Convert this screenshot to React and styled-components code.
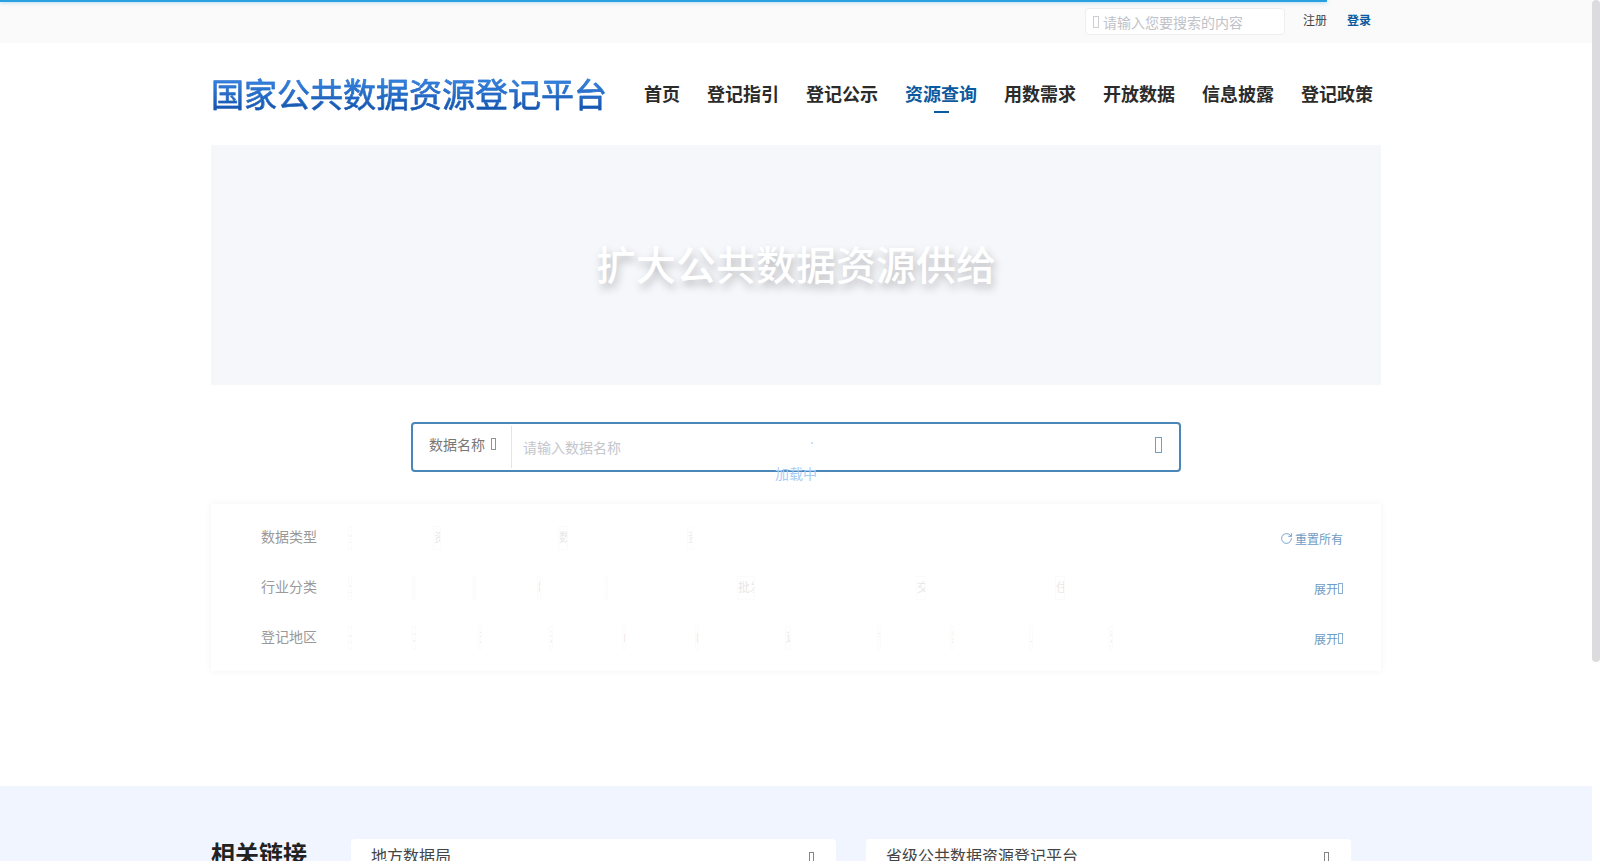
import React from 'react';
import styled, { createGlobalStyle } from 'styled-components';
import { RotateCw } from 'lucide-react';

const FONT = `"Liberation Sans", "Noto Sans CJK SC", sans-serif`;

const GlobalStyle = createGlobalStyle`
    html, body { height: 100%; overflow: hidden; }
    body { margin: 0; font-family: ${FONT}; background: #fff; color: #333; }
`;

const Page = styled.div`
    height: 100vh;
    display: flex;
    overflow: hidden;
`;

const Main = styled.main`
    flex: 1;
    min-width: 0;
`;

// the screenshot shows a page scrollbar, headless chrome hides the real one
const ScrollRail = styled.div`
    width: 8px;
    flex: none;
    background: #fff;
`;

const ScrollThumb = styled.div`
    height: 662px;
    background: #dcdcde;
    border-radius: 4px;
`;

const Progress = styled.div`
    position: fixed;
    top: 0;
    left: 0;
    width: 1327px;
    height: 2px;
    background: #29a0e0;
    box-shadow: 0 0 4px rgba(41, 160, 224, 0.6);
    z-index: 10;
`;

// icon font never loaded in the reference: the glyph shows as an empty box
const Tofu = styled.i`
    display: inline-block;
    flex: none;
    width: ${p => p.$w || 6}px;
    height: ${p => p.$h || 12}px;
    box-sizing: border-box;
    border: 1px solid currentColor;
    opacity: 0.8;
`;

const Container = styled.div`
    width: 1170px;
    margin: 0 auto;
`;

const TopBand = styled.div`
    height: 43px;
    background: #fafafa;
`;

const TopInner = styled(Container)`
    height: 100%;
    display: flex;
    align-items: center;
    justify-content: flex-end;
    padding-right: 10px;
    box-sizing: border-box;
`;

const TopSearch = styled.div`
    width: 200px;
    height: 27px;
    margin-right: 18px;
    padding-left: 7px;
    box-sizing: border-box;
    display: flex;
    align-items: center;
    gap: 4px;
    background: #fff;
    border: 1px solid #eeeeee;
    border-radius: 4px;
    color: #bfc2c8;
    font-size: 14px;
`;

const TopLink = styled.a`
    font-size: 12px;
    margin-left: ${p => (p.$active ? '20px' : '0')};
    margin-top: -5px;
    color: ${p => (p.$active ? '#0b5aa0' : '#444')};
    font-weight: ${p => (p.$active ? 700 : 400)};
`;

const Header = styled(Container)`
    height: 102px;
    display: flex;
    align-items: center;
    justify-content: space-between;
    padding-right: 8px;
    box-sizing: border-box;
`;

const Logo = styled.h1`
    margin: 4px 0 0;
    font-size: 33px;
    line-height: 40px;
    font-weight: 400;
    white-space: nowrap;
    background: linear-gradient(180deg, #3a8ae8, #0d4aa0);
    -webkit-background-clip: text;
    background-clip: text;
    color: transparent;
    -webkit-text-stroke: 0.5px rgba(30, 100, 195, 0.75);
`;

const Nav = styled.nav`
    display: flex;
    gap: 27px;
    margin-top: 1px;
`;

const NavItem = styled.a`
    position: relative;
    font-size: 18px;
    line-height: 24px;
    font-weight: 700;
    white-space: nowrap;
    color: ${p => (p.$active ? '#0b5aa0' : '#2b2b2b')};

    ${p => p.$active && `
        &::after {
            content: '';
            position: absolute;
            left: 29px;
            bottom: -6px;
            width: 15px;
            height: 2px;
            background: #0b5aa0;
        }
    `}
`;

const Hero = styled(Container)`
    height: 240px;
    display: flex;
    align-items: center;
    justify-content: center;
    background: #f6f7fb;
`;

const HeroTitle = styled.div`
    margin-top: -4px;
    font-size: 40px;
    color: #fff;
    font-weight: 500;
    text-shadow: 2px 5px 8px rgba(0, 0, 0, 0.25);
`;

const QueryArea = styled(Container)`
    position: relative;
    padding-top: 37px;
    padding-bottom: 115px;
`;

const SearchBox = styled.div`
    width: 770px;
    height: 50px;
    margin: 0 auto;
    box-sizing: border-box;
    display: flex;
    align-items: center;
    border: 2px solid #4a86b8;
    border-radius: 4px;
    background: #fff;
`;

const SearchType = styled.div`
    width: 99px;
    height: 42px;
    padding: 0 0 6px 16px;
    box-sizing: border-box;
    display: flex;
    align-items: center;
    gap: 6px;
    border-right: 1px solid #e4e4e4;
    font-size: 14px;
    color: #777;
`;

const SearchHint = styled.div`
    flex: 1;
    padding-left: 11px;
    font-size: 14px;
    color: #c4c6cc;
`;

const SearchButton = styled.div`
    display: flex;
    margin-right: 17px;
    padding-bottom: 4px;
    color: #4a86b8;
`;

const LoadingText = styled.div`
    position: absolute;
    left: 0;
    right: 0;
    top: 79px;
    text-align: center;
    font-size: 14px;
    line-height: 20px;
    color: #a8cdf5;
    pointer-events: none;
`;

const Dot = styled.i`
    position: absolute;
    left: 600px;
    top: 57px;
    width: 2px;
    height: 2px;
    border-radius: 50%;
    background: #b5d3f3;
`;

const FilterCard = styled.div`
    margin-top: 32px;
    padding: 9px 0 8px;
    background: #fff;
    box-shadow: 0 0 8px rgba(0, 0, 0, 0.05);
`;

const FilterRow = styled.div`
    height: 50px;
    display: flex;
    align-items: center;
    padding: 0 38px 0 50px;
`;

const RowLabel = styled.div`
    width: 87px;
    flex: none;
    margin-top: -5px;
    font-size: 14px;
    color: #999;
`;

const Chips = styled.div`
    flex: 1;
    display: flex;
    align-items: center;
`;

const Chip = styled.span`
    width: ${p => p.$w}px;
    height: 24px;
    margin-left: ${p => p.$gap}px;
    margin-top: -1px;
    flex: none;
    overflow: hidden;
    box-sizing: border-box;
    border: 1px solid #fbfbfb;
    font-size: 12px;
    line-height: 22px;
    color: #e8e8e8;
    white-space: nowrap;
`;

const RowAction = styled.div`
    display: flex;
    align-items: center;
    gap: ${p => p.$gap || 0}px;
    margin-top: 1px;
    font-size: 12px;
    color: #6f9cc4;
    white-space: nowrap;
`;

const Footer = styled.div`
    height: 334px;
    padding-top: 53px;
    box-sizing: border-box;
    background: #f0f5ff;
`;

const FooterInner = styled(Container)`
    display: flex;
`;

const FooterTitle = styled.div`
    width: 140px;
    flex: none;
    font-size: 24px;
    line-height: 32px;
    font-weight: 700;
    color: #222;
`;

const LinkSelect = styled.div`
    width: 485px;
    height: 56px;
    margin-right: 30px;
    padding: 6px 22px 0 20px;
    box-sizing: border-box;
    display: flex;
    justify-content: space-between;
    line-height: 24px;
    background: #fff;
    border-radius: 4px;
    font-size: 16px;
    color: #444;
`;

const LinkTofu = styled(Tofu)`
    margin-top: 7px;
    color: #666;
`;

const NAV_ITEMS = ['首页', '登记指引', '登记公示', '资源查询', '用数需求', '开放数据', '信息披露', '登记政策'];

const ROWS = [
    { label: '数据类型', chips: [[0, 4, '全'], [81, 8, '资'], [117, 10, '数据'], [119, 6, '资']] },
    { label: '行业分类', chips: [[0, 4, '全'], [60, 3, '农'], [58, 3, '采'], [61, 4, '制'], [64, 3, '电'], [129, 18, '批发'], [161, 10, '交'], [129, 10, '住']] },
    { label: '登记地区', chips: [[0, 4, '全'], [60, 4, '北'], [62, 4, '天'], [67, 4, '河'], [69, 4, '山'], [69, 4, '内'], [86, 6, '辽'], [86, 4, '吉'], [69, 4, '黑'], [75, 4, '上'], [76, 4, '江']] },
];

const App = () => (
    <Page>
        <GlobalStyle />
        <Progress />
        <Main>
            <TopBand>
                <TopInner>
                    <TopSearch><Tofu />请输入您要搜索的内容</TopSearch>
                    <TopLink>注册</TopLink>
                    <TopLink $active>登录</TopLink>
                </TopInner>
            </TopBand>
            <Header>
                <Logo>国家公共数据资源登记平台</Logo>
                <Nav>
                    {NAV_ITEMS.map(item => (
                        <NavItem key={item} $active={item === '资源查询'}>{item}</NavItem>
                    ))}
                </Nav>
            </Header>
            <Hero>
                <HeroTitle>扩大公共数据资源供给</HeroTitle>
            </Hero>
            <QueryArea>
                <SearchBox>
                    <SearchType>数据名称<Tofu $w={5} /></SearchType>
                    <SearchHint>请输入数据名称</SearchHint>
                    <SearchButton><Tofu $w={7} $h={16} /></SearchButton>
                </SearchBox>
                <FilterCard>
                    {ROWS.map((row, i) => (
                        <FilterRow key={row.label}>
                            <RowLabel>{row.label}</RowLabel>
                            <Chips>
                                {row.chips.map(([gap, w, text], j) => (
                                    <Chip key={j} $gap={gap} $w={w}>{text}</Chip>
                                ))}
                            </Chips>
                            {i === 0 ? (
                                <RowAction $gap={2}><RotateCw size={13} strokeWidth={1.5} color="#5b93c6" />重置所有</RowAction>
                            ) : (
                                <RowAction>展开<Tofu $w={5} $h={11} /></RowAction>
                            )}
                        </FilterRow>
                    ))}
                </FilterCard>
                <Dot />
                <LoadingText>加载中</LoadingText>
            </QueryArea>
            <Footer>
                <FooterInner>
                    <FooterTitle>相关链接</FooterTitle>
                    <LinkSelect>地方数据局<LinkTofu $w={5} $h={13} /></LinkSelect>
                    <LinkSelect>省级公共数据资源登记平台<LinkTofu $w={5} $h={13} /></LinkSelect>
                </FooterInner>
            </Footer>
        </Main>
        <ScrollRail><ScrollThumb /></ScrollRail>
    </Page>
);

export default App;
